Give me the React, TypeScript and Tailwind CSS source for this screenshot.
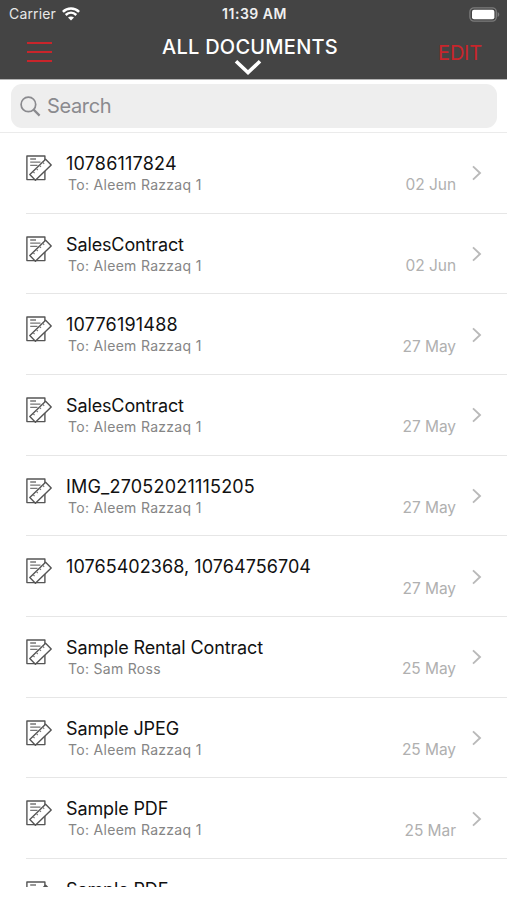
import { useState } from 'react';

type Doc = {
  title: string;
  to?: string;
  date: string;
};

const documents: Doc[] = [
  { title: '10786117824', to: 'Aleem Razzaq 1', date: '02 Jun' },
  { title: 'SalesContract', to: 'Aleem Razzaq 1', date: '02 Jun' },
  { title: '10776191488', to: 'Aleem Razzaq 1', date: '27 May' },
  { title: 'SalesContract', to: 'Aleem Razzaq 1', date: '27 May' },
  { title: 'IMG_27052021115205', to: 'Aleem Razzaq 1', date: '27 May' },
  { title: '10765402368, 10764756704', date: '27 May' },
  { title: 'Sample Rental Contract', to: 'Sam Ross', date: '25 May' },
  { title: 'Sample JPEG', to: 'Aleem Razzaq 1', date: '25 May' },
  { title: 'Sample PDF', to: 'Aleem Razzaq 1', date: '25 Mar' },
  { title: 'Sample PDF', to: 'Aleem Razzaq 1', date: '25 Mar' },
];

// numeric names get slightly wider spacing than worded ones
function titleTracking(title: string) {
  if (title.includes(',')) return 'tracking-[0.06px]';
  return /\d{6}/.test(title) ? 'tracking-[0.2px]' : 'tracking-[-0.13px]';
}

function WifiIcon() {
  return (
    <svg width="18" height="14" viewBox="0 0 18 14" fill="none" stroke="#fff" strokeWidth="2.5">
      <path d="M0.9 4.8C5.4 0.4 12.6 0.4 17.1 4.8" />
      <path d="M3.7 8C6.8 5.1 11.2 5.1 14.3 8" />
      <path d="M6 10.6C7.7 9 10.3 9 12 10.6L9 13.6Z" fill="#fff" stroke="none" />
    </svg>
  );
}

function BatteryIcon() {
  return (
    <svg width="31" height="15" viewBox="0 0 31 15" fill="none">
      <rect x="0.9" y="0.9" width="26.4" height="13.2" rx="4" stroke="#7b7b7b" strokeWidth="1.3" />
      <rect x="3" y="2.8" width="22.4" height="9.4" rx="2" fill="#fff" />
      <path d="M28.6 5C30.8 5.8 30.8 9.2 28.6 10Z" fill="#7b7b7b" />
    </svg>
  );
}

function DocumentIcon() {
  return (
    <svg
      width="26"
      height="26"
      viewBox="0 0 26 26"
      fill="none"
      stroke="#555"
      strokeWidth="1.4"
      strokeLinejoin="round"
    >
      <path d="M18.9 6V1H0.9V24.6H18.9V15" />
      <path d="M4.2 4H10M4.2 7.2H14.5M4.2 10.4H11.5" stroke="#777" strokeWidth="1.3" />
      <path d="M19.6 4.3L25.2 9.9L9.4 25.2L3.8 19.6Z" fill="#fff" strokeWidth="1.4" />
      <path d="M16.6 7.2L18.2 8.8M13.4 10.3L15 11.9M10.2 13.4L11.8 15M7 16.5L8.6 18.1" stroke="#777" strokeWidth="1.1" />
    </svg>
  );
}

function DocumentRow({ doc }: { doc: Doc }) {
  return (
    <li className="ml-[26px] flex h-[80.66px] shrink-0 border-b border-[#e6e6e6]">
      <div className="w-10 shrink-0 pt-[22px]">
        <DocumentIcon />
      </div>
      <div className="grow whitespace-nowrap pt-[20.1px]">
        <h2 className={`text-[18px] leading-[22px] text-[#111] ${titleTracking(doc.title)}`}>{doc.title}</h2>
        {doc.to && (
          <p className="pl-0.5 text-[14px] leading-[19px] tracking-[0.3px] text-[#858585]">To: {doc.to}</p>
        )}
      </div>
      <span className="pt-[42.3px] text-[15.5px] leading-5 tracking-[-0.05px] text-[#b0b0b0]">{doc.date}</span>
      <div className="ml-[15px] w-9 shrink-0 pt-[32.3px]">
        <svg width="12" height="16" viewBox="0 0 12 16" fill="none" stroke="#b9b9b9" strokeWidth="1.9">
          <path d="M2 1.4L9 8L2 14.6" />
        </svg>
      </div>
    </li>
  );
}

export default function App() {
  const [query, setQuery] = useState('');
  const visible = documents.filter((d) => d.title.toLowerCase().includes(query.toLowerCase()));

  return (
    <div className="flex h-[900px] w-[507px] flex-col overflow-hidden bg-white font-['Inter',sans-serif]">
      <header className="h-20 shrink-0 border-b border-[#b4b4b4] bg-[#444] text-white">
        <div className="grid h-7 grid-cols-3 items-center pl-[9px] pr-[7px]">
          <div className="flex items-center gap-[6px] text-[14px] leading-7 tracking-[0.15px] text-[#e8e8e8]">
            Carrier
            <WifiIcon />
          </div>
          <div className="text-center text-[14px] font-semibold leading-7 tracking-[0.5px] text-[#f0f0f0]">11:39 AM</div>
          <div className="flex justify-end">
            <BatteryIcon />
          </div>
        </div>
        <div className="grid h-[51px] grid-cols-[135px_1fr_135px] pl-[27px] pr-[25px]">
          <button aria-label="Menu" className="flex w-[25px] flex-col gap-[7px] pt-[14px]">
            <span className="h-[2px] w-full bg-[#c9252b]" />
            <span className="h-[2px] w-full bg-[#c9252b]" />
            <span className="h-[2px] w-full bg-[#c9252b]" />
          </button>
          <button className="flex flex-col items-start pt-[7px]">
            <span className="whitespace-nowrap text-[20px] font-medium leading-6 tracking-[0.25px]">ALL DOCUMENTS</span>
            <svg className="ml-[72px]" width="28" height="17" viewBox="0 0 28 17" fill="none" stroke="#fff" strokeWidth="3.6">
              <path d="M2 2.2L14 13.6L26 2.2" />
            </svg>
          </button>
          <button className="self-start justify-self-end pt-[13px] text-[20px] leading-6 tracking-[-0.2px] text-[#c9252b]">
            EDIT
          </button>
        </div>
      </header>

      <div className="h-[53px] shrink-0 border-b border-[#ebebeb] pl-[11px] pr-[10px] pt-1">
        <label className="flex h-[44px] items-center gap-[6px] rounded-[11px] bg-[#eee] pl-[9px]">
          <svg width="21" height="21" viewBox="0 0 21 21" fill="none" stroke="#8a8a8e" strokeWidth="1.7">
            <circle cx="8.4" cy="8.4" r="7.3" />
            <path d="M13.6 13.6L19.6 19.6" strokeWidth="2.2" />
          </svg>
          <input
            value={query}
            onChange={(e) => setQuery(e.target.value)}
            placeholder="Search"
            className="grow bg-transparent text-[20px] tracking-[-0.35px] outline-none placeholder:text-[#8a8a8e]"
          />
        </label>
      </div>

      <ul className="flex h-[754px] flex-col overflow-hidden">
        {visible.map((doc, i) => (
          <DocumentRow key={i} doc={doc} />
        ))}
      </ul>
    </div>
  );
}
